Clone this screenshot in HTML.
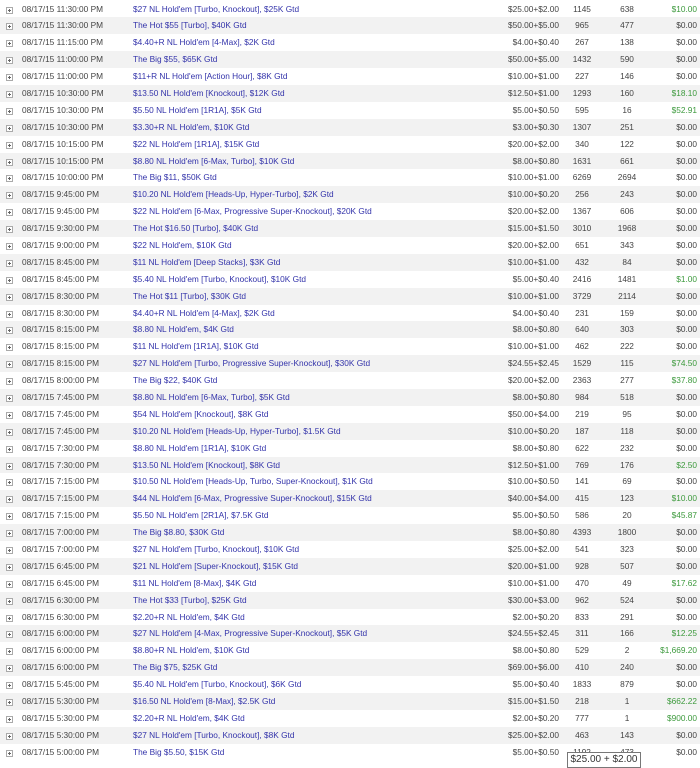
<!DOCTYPE html>
<html><head><meta charset="utf-8"><style>
body{margin:0;width:700px;height:762px;overflow:hidden;background:#fff;font-family:"Liberation Sans",Arial,sans-serif;font-size:8.3px;color:#444}
#t{padding-top:0.5px}
.r{position:relative;height:16.9px;line-height:17px;white-space:nowrap}
.r:nth-child(even){background:#f2f2f2}
.r span{position:absolute;top:0}
.p{left:6px;top:6px!important;width:5px;height:5px;border:1px solid #aaa;background:#fff;line-height:5px}
.p:before{content:"";position:absolute;left:1px;top:2px;width:3px;height:1px;background:#666}
.p:after{content:"";position:absolute;left:2px;top:1px;width:1px;height:3px;background:#666}
.d{left:22px}
.n{left:133px;color:#3333aa}
.b{right:141px}
.e{left:562px;width:40px;text-align:center}
.c{left:607px;width:40px;text-align:center}
.w{right:3px}
.g{color:#3d9a3d}
#tip{position:absolute;left:567px;top:752px;width:72px;height:14px;border:1px solid #777;background:#fff;font-size:10px;line-height:14px;text-align:center;color:#333;white-space:nowrap;overflow:hidden}
</style></head><body>
<div id="t">
<div class="r"><span class="p"></span><span class="d">08/17/15 11:30:00 PM</span><span class="n">$27 NL Hold'em [Turbo, Knockout], $25K Gtd</span><span class="b">$25.00+$2.00</span><span class="e">1145</span><span class="c">638</span><span class="w g">$10.00</span></div>
<div class="r"><span class="p"></span><span class="d">08/17/15 11:30:00 PM</span><span class="n">The Hot $55 [Turbo], $40K Gtd</span><span class="b">$50.00+$5.00</span><span class="e">965</span><span class="c">477</span><span class="w">$0.00</span></div>
<div class="r"><span class="p"></span><span class="d">08/17/15 11:15:00 PM</span><span class="n">$4.40+R NL Hold'em [4-Max], $2K Gtd</span><span class="b">$4.00+$0.40</span><span class="e">267</span><span class="c">138</span><span class="w">$0.00</span></div>
<div class="r"><span class="p"></span><span class="d">08/17/15 11:00:00 PM</span><span class="n">The Big $55, $65K Gtd</span><span class="b">$50.00+$5.00</span><span class="e">1432</span><span class="c">590</span><span class="w">$0.00</span></div>
<div class="r"><span class="p"></span><span class="d">08/17/15 11:00:00 PM</span><span class="n">$11+R NL Hold'em [Action Hour], $8K Gtd</span><span class="b">$10.00+$1.00</span><span class="e">227</span><span class="c">146</span><span class="w">$0.00</span></div>
<div class="r"><span class="p"></span><span class="d">08/17/15 10:30:00 PM</span><span class="n">$13.50 NL Hold'em [Knockout], $12K Gtd</span><span class="b">$12.50+$1.00</span><span class="e">1293</span><span class="c">160</span><span class="w g">$18.10</span></div>
<div class="r"><span class="p"></span><span class="d">08/17/15 10:30:00 PM</span><span class="n">$5.50 NL Hold'em [1R1A], $5K Gtd</span><span class="b">$5.00+$0.50</span><span class="e">595</span><span class="c">16</span><span class="w g">$52.91</span></div>
<div class="r"><span class="p"></span><span class="d">08/17/15 10:30:00 PM</span><span class="n">$3.30+R NL Hold'em, $10K Gtd</span><span class="b">$3.00+$0.30</span><span class="e">1307</span><span class="c">251</span><span class="w">$0.00</span></div>
<div class="r"><span class="p"></span><span class="d">08/17/15 10:15:00 PM</span><span class="n">$22 NL Hold'em [1R1A], $15K Gtd</span><span class="b">$20.00+$2.00</span><span class="e">340</span><span class="c">122</span><span class="w">$0.00</span></div>
<div class="r"><span class="p"></span><span class="d">08/17/15 10:15:00 PM</span><span class="n">$8.80 NL Hold'em [6-Max, Turbo], $10K Gtd</span><span class="b">$8.00+$0.80</span><span class="e">1631</span><span class="c">661</span><span class="w">$0.00</span></div>
<div class="r"><span class="p"></span><span class="d">08/17/15 10:00:00 PM</span><span class="n">The Big $11, $50K Gtd</span><span class="b">$10.00+$1.00</span><span class="e">6269</span><span class="c">2694</span><span class="w">$0.00</span></div>
<div class="r"><span class="p"></span><span class="d">08/17/15 9:45:00 PM</span><span class="n">$10.20 NL Hold'em [Heads-Up, Hyper-Turbo], $2K Gtd</span><span class="b">$10.00+$0.20</span><span class="e">256</span><span class="c">243</span><span class="w">$0.00</span></div>
<div class="r"><span class="p"></span><span class="d">08/17/15 9:45:00 PM</span><span class="n">$22 NL Hold'em [6-Max, Progressive Super-Knockout], $20K Gtd</span><span class="b">$20.00+$2.00</span><span class="e">1367</span><span class="c">606</span><span class="w">$0.00</span></div>
<div class="r"><span class="p"></span><span class="d">08/17/15 9:30:00 PM</span><span class="n">The Hot $16.50 [Turbo], $40K Gtd</span><span class="b">$15.00+$1.50</span><span class="e">3010</span><span class="c">1968</span><span class="w">$0.00</span></div>
<div class="r"><span class="p"></span><span class="d">08/17/15 9:00:00 PM</span><span class="n">$22 NL Hold'em, $10K Gtd</span><span class="b">$20.00+$2.00</span><span class="e">651</span><span class="c">343</span><span class="w">$0.00</span></div>
<div class="r"><span class="p"></span><span class="d">08/17/15 8:45:00 PM</span><span class="n">$11 NL Hold'em [Deep Stacks], $3K Gtd</span><span class="b">$10.00+$1.00</span><span class="e">432</span><span class="c">84</span><span class="w">$0.00</span></div>
<div class="r"><span class="p"></span><span class="d">08/17/15 8:45:00 PM</span><span class="n">$5.40 NL Hold'em [Turbo, Knockout], $10K Gtd</span><span class="b">$5.00+$0.40</span><span class="e">2416</span><span class="c">1481</span><span class="w g">$1.00</span></div>
<div class="r"><span class="p"></span><span class="d">08/17/15 8:30:00 PM</span><span class="n">The Hot $11 [Turbo], $30K Gtd</span><span class="b">$10.00+$1.00</span><span class="e">3729</span><span class="c">2114</span><span class="w">$0.00</span></div>
<div class="r"><span class="p"></span><span class="d">08/17/15 8:30:00 PM</span><span class="n">$4.40+R NL Hold'em [4-Max], $2K Gtd</span><span class="b">$4.00+$0.40</span><span class="e">231</span><span class="c">159</span><span class="w">$0.00</span></div>
<div class="r"><span class="p"></span><span class="d">08/17/15 8:15:00 PM</span><span class="n">$8.80 NL Hold'em, $4K Gtd</span><span class="b">$8.00+$0.80</span><span class="e">640</span><span class="c">303</span><span class="w">$0.00</span></div>
<div class="r"><span class="p"></span><span class="d">08/17/15 8:15:00 PM</span><span class="n">$11 NL Hold'em [1R1A], $10K Gtd</span><span class="b">$10.00+$1.00</span><span class="e">462</span><span class="c">222</span><span class="w">$0.00</span></div>
<div class="r"><span class="p"></span><span class="d">08/17/15 8:15:00 PM</span><span class="n">$27 NL Hold'em [Turbo, Progressive Super-Knockout], $30K Gtd</span><span class="b">$24.55+$2.45</span><span class="e">1529</span><span class="c">115</span><span class="w g">$74.50</span></div>
<div class="r"><span class="p"></span><span class="d">08/17/15 8:00:00 PM</span><span class="n">The Big $22, $40K Gtd</span><span class="b">$20.00+$2.00</span><span class="e">2363</span><span class="c">277</span><span class="w g">$37.80</span></div>
<div class="r"><span class="p"></span><span class="d">08/17/15 7:45:00 PM</span><span class="n">$8.80 NL Hold'em [6-Max, Turbo], $5K Gtd</span><span class="b">$8.00+$0.80</span><span class="e">984</span><span class="c">518</span><span class="w">$0.00</span></div>
<div class="r"><span class="p"></span><span class="d">08/17/15 7:45:00 PM</span><span class="n">$54 NL Hold'em [Knockout], $8K Gtd</span><span class="b">$50.00+$4.00</span><span class="e">219</span><span class="c">95</span><span class="w">$0.00</span></div>
<div class="r"><span class="p"></span><span class="d">08/17/15 7:45:00 PM</span><span class="n">$10.20 NL Hold'em [Heads-Up, Hyper-Turbo], $1.5K Gtd</span><span class="b">$10.00+$0.20</span><span class="e">187</span><span class="c">118</span><span class="w">$0.00</span></div>
<div class="r"><span class="p"></span><span class="d">08/17/15 7:30:00 PM</span><span class="n">$8.80 NL Hold'em [1R1A], $10K Gtd</span><span class="b">$8.00+$0.80</span><span class="e">622</span><span class="c">232</span><span class="w">$0.00</span></div>
<div class="r"><span class="p"></span><span class="d">08/17/15 7:30:00 PM</span><span class="n">$13.50 NL Hold'em [Knockout], $8K Gtd</span><span class="b">$12.50+$1.00</span><span class="e">769</span><span class="c">176</span><span class="w g">$2.50</span></div>
<div class="r"><span class="p"></span><span class="d">08/17/15 7:15:00 PM</span><span class="n">$10.50 NL Hold'em [Heads-Up, Turbo, Super-Knockout], $1K Gtd</span><span class="b">$10.00+$0.50</span><span class="e">141</span><span class="c">69</span><span class="w">$0.00</span></div>
<div class="r"><span class="p"></span><span class="d">08/17/15 7:15:00 PM</span><span class="n">$44 NL Hold'em [6-Max, Progressive Super-Knockout], $15K Gtd</span><span class="b">$40.00+$4.00</span><span class="e">415</span><span class="c">123</span><span class="w g">$10.00</span></div>
<div class="r"><span class="p"></span><span class="d">08/17/15 7:15:00 PM</span><span class="n">$5.50 NL Hold'em [2R1A], $7.5K Gtd</span><span class="b">$5.00+$0.50</span><span class="e">586</span><span class="c">20</span><span class="w g">$45.87</span></div>
<div class="r"><span class="p"></span><span class="d">08/17/15 7:00:00 PM</span><span class="n">The Big $8.80, $30K Gtd</span><span class="b">$8.00+$0.80</span><span class="e">4393</span><span class="c">1800</span><span class="w">$0.00</span></div>
<div class="r"><span class="p"></span><span class="d">08/17/15 7:00:00 PM</span><span class="n">$27 NL Hold'em [Turbo, Knockout], $10K Gtd</span><span class="b">$25.00+$2.00</span><span class="e">541</span><span class="c">323</span><span class="w">$0.00</span></div>
<div class="r"><span class="p"></span><span class="d">08/17/15 6:45:00 PM</span><span class="n">$21 NL Hold'em [Super-Knockout], $15K Gtd</span><span class="b">$20.00+$1.00</span><span class="e">928</span><span class="c">507</span><span class="w">$0.00</span></div>
<div class="r"><span class="p"></span><span class="d">08/17/15 6:45:00 PM</span><span class="n">$11 NL Hold'em [8-Max], $4K Gtd</span><span class="b">$10.00+$1.00</span><span class="e">470</span><span class="c">49</span><span class="w g">$17.62</span></div>
<div class="r"><span class="p"></span><span class="d">08/17/15 6:30:00 PM</span><span class="n">The Hot $33 [Turbo], $25K Gtd</span><span class="b">$30.00+$3.00</span><span class="e">962</span><span class="c">524</span><span class="w">$0.00</span></div>
<div class="r"><span class="p"></span><span class="d">08/17/15 6:30:00 PM</span><span class="n">$2.20+R NL Hold'em, $4K Gtd</span><span class="b">$2.00+$0.20</span><span class="e">833</span><span class="c">291</span><span class="w">$0.00</span></div>
<div class="r"><span class="p"></span><span class="d">08/17/15 6:00:00 PM</span><span class="n">$27 NL Hold'em [4-Max, Progressive Super-Knockout], $5K Gtd</span><span class="b">$24.55+$2.45</span><span class="e">311</span><span class="c">166</span><span class="w g">$12.25</span></div>
<div class="r"><span class="p"></span><span class="d">08/17/15 6:00:00 PM</span><span class="n">$8.80+R NL Hold'em, $10K Gtd</span><span class="b">$8.00+$0.80</span><span class="e">529</span><span class="c">2</span><span class="w g">$1,669.20</span></div>
<div class="r"><span class="p"></span><span class="d">08/17/15 6:00:00 PM</span><span class="n">The Big $75, $25K Gtd</span><span class="b">$69.00+$6.00</span><span class="e">410</span><span class="c">240</span><span class="w">$0.00</span></div>
<div class="r"><span class="p"></span><span class="d">08/17/15 5:45:00 PM</span><span class="n">$5.40 NL Hold'em [Turbo, Knockout], $6K Gtd</span><span class="b">$5.00+$0.40</span><span class="e">1833</span><span class="c">879</span><span class="w">$0.00</span></div>
<div class="r"><span class="p"></span><span class="d">08/17/15 5:30:00 PM</span><span class="n">$16.50 NL Hold'em [8-Max], $2.5K Gtd</span><span class="b">$15.00+$1.50</span><span class="e">218</span><span class="c">1</span><span class="w g">$662.22</span></div>
<div class="r"><span class="p"></span><span class="d">08/17/15 5:30:00 PM</span><span class="n">$2.20+R NL Hold'em, $4K Gtd</span><span class="b">$2.00+$0.20</span><span class="e">777</span><span class="c">1</span><span class="w g">$900.00</span></div>
<div class="r"><span class="p"></span><span class="d">08/17/15 5:30:00 PM</span><span class="n">$27 NL Hold'em [Turbo, Knockout], $8K Gtd</span><span class="b">$25.00+$2.00</span><span class="e">463</span><span class="c">143</span><span class="w">$0.00</span></div>
<div class="r"><span class="p"></span><span class="d">08/17/15 5:00:00 PM</span><span class="n">The Big $5.50, $15K Gtd</span><span class="b">$5.00+$0.50</span><span class="e">1192</span><span class="c">473</span><span class="w">$0.00</span></div>
</div>
<div id="tip">$25.00 + $2.00</div>
</body></html>
